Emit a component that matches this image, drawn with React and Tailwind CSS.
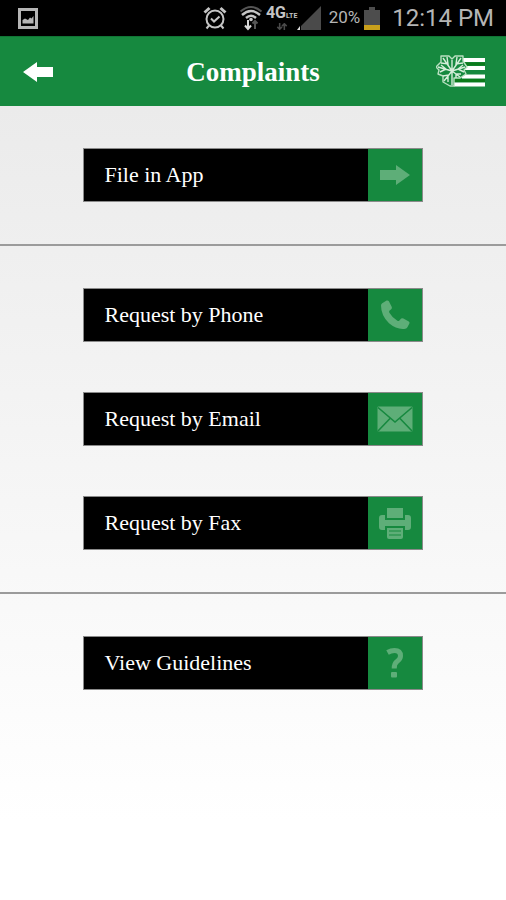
import React from 'react';

/**
 * Complaints screen - pick how a complaint gets filed
 */

const ArrowIcon = ({ className }) => (
  <svg viewBox="0 0 30 20" className={className} fill="currentColor" aria-hidden="true">
    <path d="M30 10 L16 0 V5 H0 V15 H16 V20 Z" />
  </svg>
);

const PhoneIcon = () => (
  <svg viewBox="0 0 30 30" className="w-[30px] h-[30px]" fill="currentColor" aria-hidden="true">
    <path d="M2.2 3.2 L6.6 .6 Q8 0 8.9 1.2 L11.8 7 Q12.3 8.2 11.2 9.2 L9.4 10.8 Q8.8 11.6 9.4 12.8 Q12.4 18 17.4 20.8 Q18.6 21.4 19.4 20.4 L21.2 18.6 Q22.2 17.8 23.4 18.4 L28.8 21.4 Q30 22.2 29.4 23.5 L27.4 27.2 Q26.8 28.4 25.4 28.7 Q17 30 9 23.3 Q1 15.7 1 5.6 Q1 4 2.2 3.2 Z" />
  </svg>
);

const EmailIcon = () => (
  <svg viewBox="0 0 36 26" className="w-9 h-[26px]" aria-hidden="true">
    <rect x="0.5" y="0.5" width="35" height="25" rx="1" fill="currentColor" />
    <path d="M1 1.5 L18 16 L35 1.5 M1 25 L13 12.5 M35 25 L23 12.5" fill="none" stroke="#16893f" strokeWidth="1.6" />
  </svg>
);

const PrinterIcon = () => (
  <svg viewBox="0 0 32 31" className="w-8 h-[31px]" fill="currentColor" aria-hidden="true">
    <path d="M8 0 H24 V10 H8 Z" />
    <path d="M3 7 H6 V12 H26 V7 H29 Q32 7 32 10 V19 Q32 22 29 22 H26 V18 H6 V22 H3 Q0 22 0 19 V10 Q0 7 3 7 Z" />
    <path d="M8 20 H24 V29 Q24 31 22 31 H10 Q8 31 8 29 Z" />
    <path d="M10 23 H22 M10 27 H22" stroke="#16893f" strokeWidth="1.2" />
  </svg>
);

const QuestionIcon = () => (
  <svg viewBox="0 0 18 30" className="w-[18px] h-[30px]" aria-hidden="true">
    <path d="M1.5 4.5 Q5 2.5 8.5 2.5 Q14.5 2.5 14.5 8 Q14.5 11 11 13.5 Q8.2 15.5 8.2 20.5" fill="none" stroke="currentColor" strokeWidth="5" />
    <rect x="5" y="24" width="6" height="5.5" rx="1" fill="currentColor" />
  </svg>
);

const SECTIONS = [
  [{ label: 'File in App', icon: <ArrowIcon className="w-[30px] h-5" /> }],
  [
    { label: 'Request by Phone', icon: <PhoneIcon /> },
    { label: 'Request by Email', icon: <EmailIcon /> },
    { label: 'Request by Fax', icon: <PrinterIcon /> }
  ],
  [{ label: 'View Guidelines', icon: <QuestionIcon /> }]
];

function StatusBar() {
  return (
    <div className="h-9 bg-black flex items-center pl-[18px] pr-3 text-[#b5b5b5] font-[Roboto,sans-serif]">
      <svg viewBox="0 0 20 21" className="w-5 h-[21px]" aria-hidden="true">
        <rect x="1.5" y="1.5" width="17" height="18" fill="none" stroke="#b5b5b5" strokeWidth="3" />
        <path d="M4.5 15.5 V12 L7 10.5 L10 12 L12 9.5 L13.5 10.5 L15.5 8 V15.5 Z" fill="#b5b5b5" />
      </svg>

      <div className="ml-auto flex items-center">
        {/* alarm */}
        <svg viewBox="0 0 24 24" className="w-6 h-6" fill="none" stroke="#c4c4c4" strokeWidth="2" aria-hidden="true">
          <circle cx="12" cy="13" r="8.5" />
          <path d="M1.5 6.5 L6.5 2 M22.5 6.5 L17.5 2" strokeWidth="3" />
          <path d="M8 12.5 L11 15.5 L16.5 10.5 M6 19.5 L3.5 22.5 M18 19.5 L20.5 22.5" />
        </svg>

        {/* wifi */}
        <svg viewBox="0 0 24 26" className="ml-3 w-6 h-[26px]" fill="none" strokeWidth="2" aria-hidden="true">
          <path d="M1.5 6.5 Q12 -2.5 22.5 6.5" stroke="#555" />
          <path d="M3 10 Q12 2 21 10 M7 13 Q12 8.5 17 13" stroke="#c4c4c4" strokeWidth="2.4" />
          <circle cx="12" cy="14.5" r="1.8" fill="#c4c4c4" />
          <path d="M9 15 V23 M6 20.5 L9 24 L12 20.5" stroke="#d8d8d8" />
          <path d="M16 24 V16 M13.5 18.5 L16 16 L18.5 18.5" stroke="#555" />
        </svg>

        {/* network type */}
        <div className="ml-1 w-[30px] h-6 flex flex-col items-center">
          <span className="text-base leading-[14px] font-bold text-[#c4c4c4] whitespace-nowrap">
            4G<span className="text-[7px]">LTE</span>
          </span>
          <svg viewBox="0 0 14 9" className="w-3.5 h-[9px]" fill="none" stroke="#4a4a4a" strokeWidth="2" aria-hidden="true">
            <path d="M4 0 V8 M1 5 L4 8 L7 5 M10 9 V1 M7 4 L10 1 L13 4" />
          </svg>
        </div>

        {/* signal */}
        <svg viewBox="0 0 24 24" className="w-6 h-6" aria-hidden="true">
          <path d="M24 0 V24 H4 V20 Z" fill="#4a4a4a" />
          <path d="M3 20 V24 H0 Z" fill="#dedede" />
        </svg>

        <span className="ml-2 text-[17px]">20%</span>

        {/* battery */}
        <svg viewBox="0 0 16 23" className="ml-1 w-4 h-[23px]" aria-hidden="true">
          <path d="M5 0 H11 V3 H16 V23 H0 V3 H5 Z" fill="#4d4d4d" />
          <rect y="18" width="16" height="5" fill="#c9a01c" />
        </svg>

        <span className="pl-3 text-2xl leading-9 whitespace-nowrap">12:14 PM</span>
      </div>
    </div>
  );
}

function MenuLogo() {
  return (
    <svg viewBox="0 0 50 34" className="w-[50px] h-[34px]" aria-hidden="true">
      <path d="M24 5 H49 M26 13 H49 M26 21.5 H49 M18 29.5 H49" stroke="#fff" strokeWidth="4" />
      <path d="M24 9 H49 M18 25.5 H49" stroke="#0b7a1a" strokeWidth="3" />
      {/* leaf outline */}
      <path
        d="M5 1 L13 1 L16 4 L19 1 L27 1 L27 6 L31 12 L28 15 L30 19 L24 23 L18 23 L18 31 L14 31 L7 27 L7 21 L2 19 L3 15 L0 12 L5 7 Z"
        fill="#16893f"
        stroke="#b9e0c1"
        strokeWidth="1.4"
        strokeLinejoin="round"
      />
      {/* leaf veins */}
      <path
        d="M16 16 L7 3 M16 16 L25 3 M16 16 L2 12 M16 16 L29 12 M16 16 L8 26 M16 16 L24 22 M16 5 V30 M11 2 L12 9 L5 8 M21 2 L20 9 L27 8 M4 17 L10 14 L5 10 M28 17 L22 14 L27 10 M7 21 L12 20 L12 27 M25 19 L20 19 L20 23"
        fill="none"
        stroke="#d5edd9"
        strokeWidth="1.4"
      />
    </svg>
  );
}

function Header() {
  return (
    <header className="h-[70px] px-5 grid grid-cols-[1fr_auto_1fr] items-center bg-[#16893f] border-t border-[#117535] text-white">
      <button type="button" aria-label="Back" className="justify-self-start pl-[3px]">
        <ArrowIcon className="w-[30px] h-5 rotate-180" />
      </button>
      <h1 className="text-[27px] font-bold leading-8">Complaints</h1>
      <button type="button" aria-label="Menu" className="justify-self-end">
        <MenuLogo />
      </button>
    </header>
  );
}

function ActionButton({ label, icon }) {
  return (
    <button
      type="button"
      className="w-[67%] h-[54px] flex items-stretch bg-black border border-[#8a8a8a] text-left text-white"
    >
      <span className="flex-1 self-center pl-5 text-[22px] leading-7">{label}</span>
      <span className="w-[54px] flex items-center justify-center bg-[#16893f] text-[#5eae78]">{icon}</span>
    </button>
  );
}

function App() {
  return (
    <div className="min-h-screen flex flex-col bg-white font-['Liberation_Serif',serif]">
      <StatusBar />
      <Header />
      <main className="flex-1 bg-linear-to-b from-[#ebebeb] to-white to-90% divide-y-2 divide-[#9b9b9b]">
        {SECTIONS.map((items, i) => (
          <section key={i} className="py-[42px] flex flex-col items-center gap-[50px]">
            {items.map(item => (
              <ActionButton key={item.label} label={item.label} icon={item.icon} />
            ))}
          </section>
        ))}
      </main>
    </div>
  );
}

export default App;
